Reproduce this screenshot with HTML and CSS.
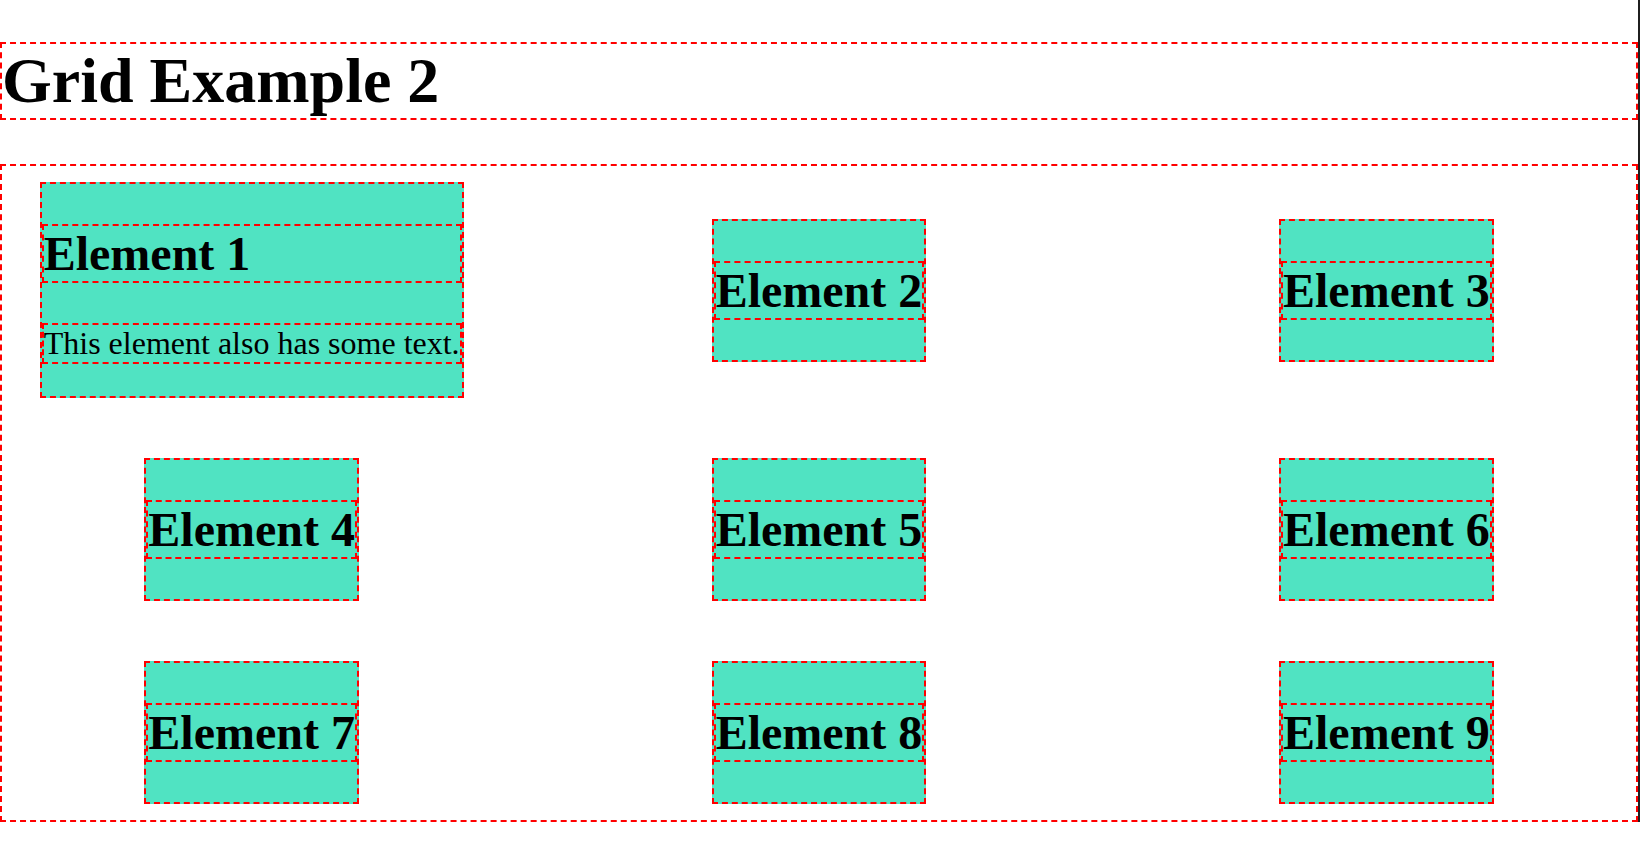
FILE: index.html
```html
<!DOCTYPE html>
<html lang="en">
<head>
  <meta charset="UTF-8" />
  <meta name="viewport" content="width=device-width, initial-scale=1.0" />
  <title>Grid Example 2</title>
  <link rel="stylesheet" href="styles.css">
</head>
<body>

  <h1 class="outline">Grid Example 2</h1>

  <!-- Grid -->
  <div class="grid outline">
    <div class="element outline">
      <h2 class="outline">Element 1</h2>
      <p class="outline">This element also has some text.</p>
    </div>
    <div class="element outline">
      <h2 class="outline">Element 2</h2>
    </div>
    <div class="element outline">
      <h2 class="outline">Element 3</h2>
    </div>
    <div class="element outline">
      <h2 class="outline">Element 4</h2>
    </div>
    <div class="element outline">
      <h2 class="outline">Element 5</h2>
    </div>
    <div class="element outline">
      <h2 class="outline">Element 6</h2>
    </div>
    <div class="element outline">
      <h2 class="outline">Element 7</h2>
    </div>
    <div class="element outline">
      <h2 class="outline">Element 8</h2>
    </div>
    <div class="element outline">
      <h2 class="outline">Element 9</h2>
    </div>
  </div>

</body>
</html>
```

FILE: styles.css
```css
html {
  border-right: 2px solid #1f1f1f;
}

body {
  font-family: "Liberation Serif", "Times New Roman", serif;
  margin: 0;
  padding: 0;
  color: black;
  background: white;
}

.outline {
  border: 2px dashed red;
}

h1 {
  font-size: 64px;
  margin: 42px 0 44px;
}

h2 {
  font-size: 48px;
  margin: 40px 0;
}

p {
  font-size: 32px;
  margin: 32px 0;
}

.grid {
  display: grid;
  grid-template-columns: 1fr 1fr 1fr;
  column-gap: 100px;
  row-gap: 60px;
  padding: 16px;
  justify-items: center;
  align-items: center;
}

.element {
  background-color: #50e3c2;
}
```
